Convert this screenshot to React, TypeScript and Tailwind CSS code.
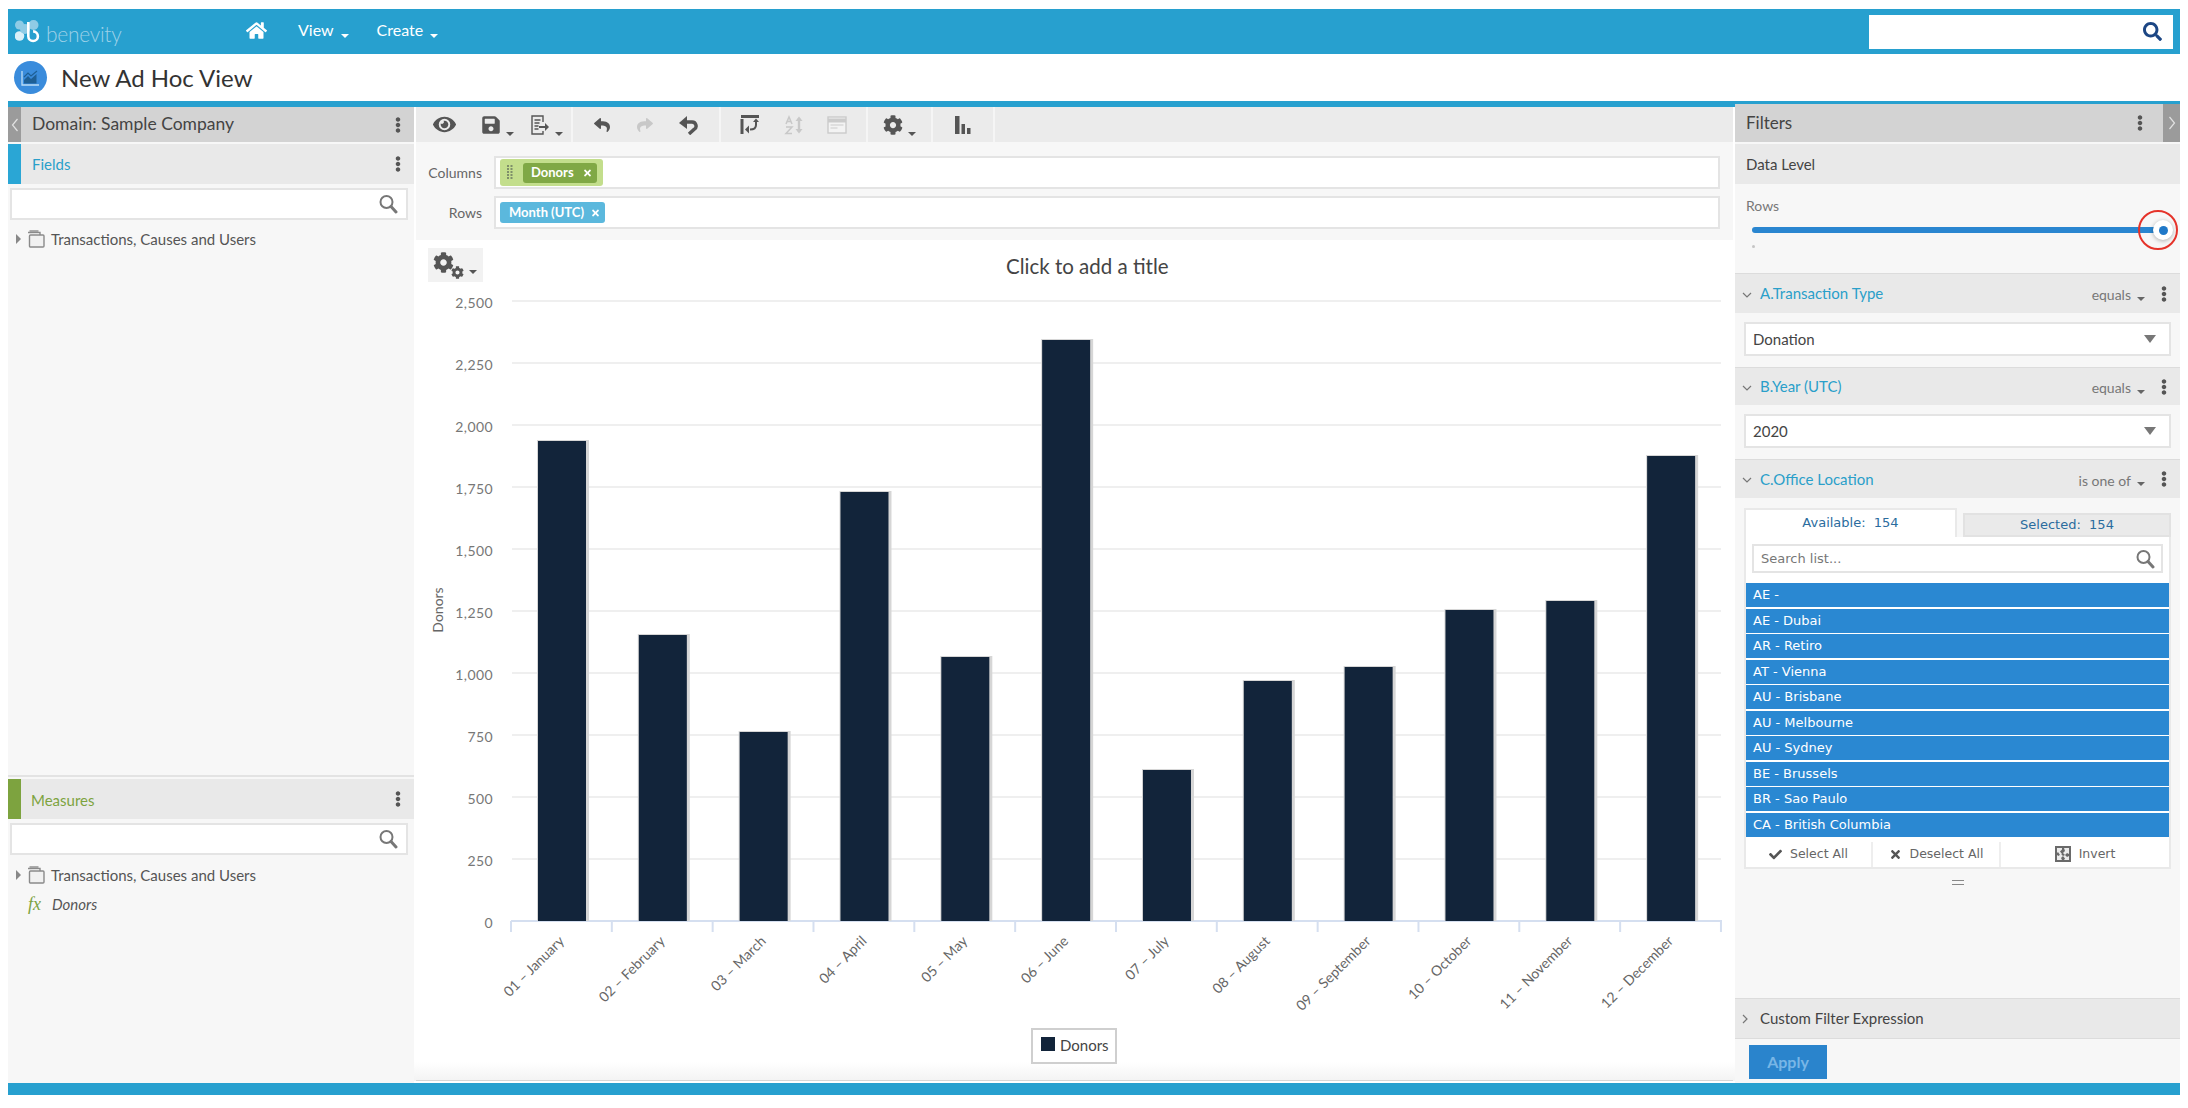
import type { ReactNode } from "react";
import { FaCheck, FaCog, FaEllipsisV, FaEye, FaHome, FaReply, FaSave, FaSearch, FaShare, FaTimes } from "react-icons/fa";

const months = [
  { label: "01 – January", top: 441 },
  { label: "02 – February", top: 635 },
  { label: "03 – March", top: 732 },
  { label: "04 – April", top: 492 },
  { label: "05 – May", top: 657 },
  { label: "06 – June", top: 340 },
  { label: "07 – July", top: 770 },
  { label: "08 – August", top: 681 },
  { label: "09 – September", top: 667 },
  { label: "10 – October", top: 610 },
  { label: "11 – November", top: 601 },
  { label: "12 – December", top: 456 },
];
const yTicks = ["2,500", "2,250", "2,000", "1,750", "1,500", "1,250", "1,000", "750", "500", "250", "0"];
const offices = ["AE -", "AE - Dubai", "AR - Retiro", "AT - Vienna", "AU - Brisbane", "AU - Melbourne", "AU - Sydney", "BE - Brussels", "BR - Sao Paulo", "CA - British Columbia"];

const Caret = ({ className = "border-t-[#555]" }: { className?: string }) => (
  <span className={`inline-block w-0 h-0 border-x-[4px] border-x-transparent border-t-[4px] ${className}`} />
);

const Dots = () => <FaEllipsisV className="w-[14px] h-[16px] text-[#555]" />;

const Magnifier = () => (
  <svg viewBox="0 0 20 20" className="w-[20px] h-[20px] text-[#777]" fill="none" stroke="currentColor">
    <circle cx="8.5" cy="8" r="6" strokeWidth="2" />
    <path d="M13 12.5l5 5.5" strokeWidth="3" strokeLinecap="round" />
  </svg>
);

const SearchBox = () => (
  <div className="h-[32px] ml-[2px] mr-[6px] mt-[4px] bg-white border-2 border-[#e4e4e4] flex items-center justify-end pr-[8px]">
    <Magnifier />
  </div>
);

const SetIcon = () => (
  <svg viewBox="0 0 18 18" className="w-[18px] h-[18px]" fill="#fff" stroke="#8a8a8a" strokeWidth="1.4">
    <path d="M1 2.5h12v3" />
    <path d="M2.5 1h9" />
    <rect x="2.5" y="5" width="14.5" height="12" rx="1" fill="#f1f1f1" />
  </svg>
);

const TreeRow = () => (
  <div className="flex items-center h-[20px] pl-[8px]">
    <span className="w-0 h-0 border-y-[5px] border-y-transparent border-l-[5px] border-l-[#888]" />
    <span className="ml-[6px] mr-[6px]"><SetIcon /></span>
    <span className="text-[15px] text-[#555]">Transactions, Causes and Users</span>
  </div>
);

const Tool = ({ w, children }: { w: string; children: ReactNode }) => (
  <div className={`${w} flex items-center justify-center gap-[5px]`}>{children}</div>
);

const ToolCaret = () => <span className="mt-[10px]"><Caret /></span>;

const FilterHeader = ({ title, op, h }: { title: string; op: string; h: string }) => (
  <div className={`${h} bg-[#e9e9e9] border-t border-[#dcdcdc] flex items-center pl-[7px] pr-[9px] shrink-0`}>
    <svg viewBox="0 0 10 6" className="w-[10px] h-[6px] mt-[2px]" fill="none" stroke="#777" strokeWidth="1.2"><path d="M1 1l4 4 4-4" /></svg>
    <span className="ml-[8px] text-[15px] text-[#2a9fc9]">{title}</span>
    <span className="ml-auto text-[14px] text-[#777] mt-[2px]">{op}</span>
    <span className="ml-[6px] mr-[12px] mt-[2px]"><Caret className="border-t-[#666]" /></span>
    <Dots />
  </div>
);

const FilterSelect = ({ value }: { value: string }) => (
  <div className="h-[34px] mx-[9px] bg-white border-2 border-[#e4e4e4] flex items-center pl-[7px] pr-[13px]">
    <span className="text-[15px] text-[#444]">{value}</span>
    <span className="ml-auto w-0 h-0 border-x-[6px] border-x-transparent border-t-[8px] border-t-[#777]" />
  </div>
);

const App = () => {
  return (
    <div className="w-[2188px] h-[1108px] bg-white pt-[9px] px-[8px] overflow-hidden font-['Lato',sans-serif]">
      <header className="h-[45px] bg-[#27a0cf] flex items-center">
        <div className="w-[150px] flex items-center pl-[7px]">
          <svg viewBox="0 0 26 24" className="w-[26px] h-[24px] mt-[-2px]">
            <circle cx="4.5" cy="6" r="4.5" fill="#8fcbe5" />
            <circle cx="18.5" cy="6" r="5" fill="#8fcbe5" />
            <circle cx="4.5" cy="17" r="4.8" fill="#d9eff8" />
            <circle cx="10" cy="10" r="5" fill="#8fcbe5" />
            <path d="M13.3 3v14.2a4.8 4.8 0 1 0 4.8-4.8" fill="none" stroke="#ffffff" strokeWidth="2.6" />
          </svg>
          <span className="ml-[5px] text-[21px] font-light text-[#9dd1e8] leading-none mt-[4px] tracking-[-0.3px]">benevity</span>
        </div>
        <FaHome className="ml-[88px] mb-[3px] w-[21px] h-[19px] text-white" />
        <span className="ml-[31px] mb-[3px] text-[16px] text-white">View</span>
        <span className="ml-[7px]"><Caret className="border-t-white" /></span>
        <span className="ml-[28px] mb-[3px] text-[16px] text-white">Create</span>
        <span className="ml-[7px]"><Caret className="border-t-white" /></span>
        <div className="ml-auto mr-[7px] w-[304px] h-[34px] bg-white flex items-center justify-end pr-[11px]">
          <FaSearch className="w-[19px] h-[19px] text-[#1c4684]" />
        </div>
      </header>

      <div className="h-[47px] flex items-center pl-[6px]">
        <span className="w-[33px] h-[33px] rounded-full bg-[#3a8cdc] flex items-center justify-center">
          <svg viewBox="0 0 19 16" className="w-[19px] h-[16px]" fill="none">
            <path d="M1 1v14h17" stroke="#bcdcf5" strokeWidth="1.3" />
            <path d="M3 13.5V10l4-4 3 3 5.5-5v9.5z" fill="#1e5f95" />
            <path d="M3 7l4-4 3 3 6-5" stroke="#1e5f95" strokeWidth="1.2" />
          </svg>
        </span>
        <h1 className="ml-[14px] text-[24px] text-[#333] leading-none">New Ad Hoc View</h1>
      </div>

      <div className="flex h-[982px]">
        <aside className="w-[406px] flex flex-col bg-[#f7f7f7]">
          <div className="h-[6px] bg-[#27a0cf] shrink-0" />
          <div className="h-[35px] bg-[#d3d3d3] flex items-center shrink-0">
            <div className="w-[13px] h-full bg-[#9b9b9b] flex items-center justify-center">
              <svg viewBox="0 0 8 14" className="w-[8px] h-[14px]" fill="none" stroke="#e2e2e2" strokeWidth="1.2"><path d="M6.5 1L1.5 7l5 6" /></svg>
            </div>
            <span className="ml-[11px] text-[17.5px] text-[#444]">Domain: Sample Company</span>
            <span className="ml-auto mr-[9px]"><Dots /></span>
          </div>
          <div className="h-[40px] mt-[2px] bg-[#e9e9e9] flex items-center shrink-0">
            <div className="w-[13px] h-full bg-[#2aa6d5]" />
            <span className="ml-[11px] text-[15px] text-[#2a9fc9]">Fields</span>
            <span className="ml-auto mr-[9px]"><Dots /></span>
          </div>
          <SearchBox />
          <div className="mt-[9px]"><TreeRow /></div>
          <div className="flex-1" />
          <div className="h-[308px] border-t-2 border-[#e3e3e3] pt-[2px] shrink-0">
            <div className="h-[40px] bg-[#e9e9e9] flex items-center">
              <div className="w-[13px] h-full bg-[#7da33f]" />
              <span className="ml-[10px] mt-[2px] text-[15px] text-[#7da33f]">Measures</span>
              <span className="ml-auto mr-[9px]"><Dots /></span>
            </div>
            <div className="mt-[2px]"><SearchBox /></div>
            <div className="mt-[10px]"><TreeRow /></div>
            <div className="flex items-center h-[20px] mt-[9px] pl-[20px]">
              <span className="w-[22px] font-['Liberation_Serif',serif] italic text-[18px] text-[#7da33f]">fx</span>
              <span className="ml-[2px] text-[15px] italic text-[#555]">Donors</span>
            </div>
          </div>
        </aside>

        <main className="w-[1321px] flex flex-col">
          <div className="h-[6px] bg-[#27a0cf] shrink-0" />
          <div className="h-[35px] ml-[2px] mr-[2px] bg-[#ebebeb] flex shrink-0">
            <div className="flex border-r-2 border-[#f5f5f5]">
              <Tool w="w-[56px]"><FaEye className="w-[23px] h-[21px] text-[#555]" /></Tool>
              <Tool w="w-[50px]"><FaSave className="w-[20px] h-[20px] text-[#555]" /><ToolCaret /></Tool>
              <Tool w="w-[49px]">
                <svg viewBox="0 0 20 20" className="w-[20px] h-[20px]" fill="none" stroke="#555" strokeWidth="1.4">
                  <path d="M13 7V1H2v18h11v-3" />
                  <path d="M4.5 5h6M4.5 8h5M4.5 11h4M4.5 14h4" />
                  <path d="M9 11h6V8l4 4-4 4v-3H9z" fill="#555" stroke="none" />
                </svg>
                <ToolCaret />
              </Tool>
            </div>
            <div className="flex border-r-2 border-[#f5f5f5]">
              <Tool w="w-[58px]"><FaReply className="w-[20px] h-[16px] text-[#555]" /></Tool>
              <Tool w="w-[28px]"><FaShare className="w-[20px] h-[16px] text-[#c8c8c8]" /></Tool>
              <Tool w="w-[60px]">
                <svg viewBox="0 0 20 20" className="w-[20px] h-[20px]" fill="none">
                  <path d="M6 7h7a4 4 0 0 1 2 7.5L10 19" stroke="#555" strokeWidth="3.4" />
                  <path d="M0 8l8-7v13z" fill="#555" />
                </svg>
              </Tool>
            </div>
            <div className="flex border-r-2 border-[#f5f5f5]">
              <Tool w="w-[58px]">
                <svg viewBox="0 0 20 19" className="w-[20px] h-[19px]" fill="none" stroke="#555">
                  <path d="M1 1.5h18" strokeWidth="3" />
                  <path d="M2 4v15" strokeWidth="3" />
                  <path d="M16 5v5c0 3-2.5 4.5-6 4.5" strokeWidth="2" />
                  <path d="M9 10.5v8l-4-4z" fill="#555" stroke="none" />
                  <path d="M13 7l3-3.5L19 7z" fill="#555" stroke="none" />
                </svg>
              </Tool>
              <Tool w="w-[29px]">
                <svg viewBox="0 0 20 20" className="w-[20px] h-[20px]" fill="none" stroke="#c8c8c8" strokeWidth="1.5">
                  <path d="M2 9l3-7 3 7M3 6.5h4M2 12h6l-6 6.5h6" />
                  <path d="M15 3v14" strokeWidth="2.4" />
                  <path d="M11.5 6L15 1.5 18.5 6zM11.5 14l3.5 4.5 3.5-4.5z" fill="#c8c8c8" stroke="none" />
                </svg>
              </Tool>
              <Tool w="w-[58px]">
                <svg viewBox="0 0 20 18" className="w-[20px] h-[18px]" fill="#f3f3f3" stroke="#cbcbcb" strokeWidth="1.4">
                  <rect x="1" y="1" width="18" height="16" />
                  <path d="M1 4.5h18" strokeWidth="4" />
                  <path d="M3.5 9h13M3.5 12h7" strokeWidth="1" />
                </svg>
              </Tool>
            </div>
            <div className="flex border-r-2 border-[#f5f5f5]">
              <Tool w="w-[63px]"><FaCog className="w-[20px] h-[20px] text-[#555]" /><ToolCaret /></Tool>
            </div>
            <div className="flex border-r-2 border-[#f5f5f5]">
              <Tool w="w-[60px]">
                <svg viewBox="0 0 16 18" className="w-[16px] h-[18px]" fill="#555">
                  <rect x="0" y="0" width="4.5" height="18" />
                  <rect x="6.5" y="8" width="3.5" height="10" />
                  <rect x="12" y="12" width="3.5" height="6" />
                </svg>
              </Tool>
            </div>
          </div>

          <div className="h-[98px] ml-[2px] mr-[2px] bg-[#f7f7f7] pt-[14px] pr-[13px] flex flex-col gap-[7px] shrink-0">
            <div className="flex items-center h-[33px]">
              <span className="w-[66px] text-right text-[14px] text-[#666]">Columns</span>
              <div className="ml-[12px] flex-1 h-full bg-white border-2 border-[#e4e4e4] flex items-center pl-[4px]">
                <div className="h-[27px] bg-[#c3de8c] rounded-[3px] flex items-center pl-[7px] pr-[6px]">
                  <svg viewBox="0 0 6 15" className="w-[6px] h-[15px]" fill="#7f8f6a">
                    {[0, 3, 6, 9, 12].map((y) => (
                      <g key={y}>
                        <rect x="0" y={y} width="2" height="2" />
                        <rect x="3.5" y={y} width="2" height="2" />
                      </g>
                    ))}
                  </svg>
                  <div className="ml-[10px] h-[20px] w-[74px] bg-[#80a845] rounded-[3px] flex items-center pl-[8px] text-white text-[13px] font-bold">
                    Donors
                    <FaTimes className="ml-auto mr-[5px] w-[9px] h-[10px]" />
                  </div>
                </div>
              </div>
            </div>
            <div className="flex items-center h-[33px]">
              <span className="w-[66px] text-right text-[14px] text-[#666]">Rows</span>
              <div className="ml-[12px] flex-1 h-full bg-white border-2 border-[#e4e4e4] flex items-center pl-[4px]">
                <div className="h-[21px] w-[105px] bg-[#5bb8dd] rounded-[3px] flex items-center pl-[9px] text-white text-[13px] font-bold">
                  Month (UTC)
                  <FaTimes className="ml-auto mr-[5px] w-[9px] h-[10px]" />
                </div>
              </div>
            </div>
          </div>

          <div className="h-[50px] flex items-start pt-[8px] pl-[14px] shrink-0">
            <div className="w-[55px] h-[34px] bg-[#f2f2f2] flex items-center pl-[5px]">
              <FaCog className="w-[21px] h-[21px] text-[#555] mb-[6px]" />
              <FaCog className="w-[13px] h-[13px] text-[#555] -ml-[3px] mt-[14px]" />
              <span className="ml-[5px] mt-[6px]"><Caret /></span>
            </div>
            <span className="ml-[523px] mt-[3px] text-[20.5px] text-[#444]">Click to add a title</span>
          </div>

          <svg viewBox="414 290 1321 791" className="w-[1321px] h-[791px] block shrink-0">
            <defs>
              <linearGradient id="chartFade" x1="0" y1="0" x2="0" y2="1">
                <stop offset="0" stopColor="#ffffff" />
                <stop offset="1" stopColor="#f3f3f3" />
              </linearGradient>
            </defs>
            <rect x="414" y="1062" width="1321" height="19" fill="url(#chartFade)" />
            <line x1="416" x2="1733" y1="1080.5" y2="1080.5" stroke="#d6d6d6" strokeWidth="1" />
            {yTicks.map((t, i) => {
              const y = 301 + i * 62;
              return (
                <g key={t}>
                  {i < 10 && <line x1="512" x2="1721" y1={y} y2={y} stroke="#efefef" strokeWidth="2" />}
                  <text x="493" y={y + 7} textAnchor="end" fontSize="14" fill="#777" letterSpacing="0.4">{t}</text>
                </g>
              );
            })}
            <text transform="translate(443 610) rotate(-90)" textAnchor="middle" fontSize="14" fill="#666">Donors</text>
            <line x1="511" x2="1722" y1="921" y2="921" stroke="#d5dff0" strokeWidth="2" />
            {[...months.map((_, i) => i), 12].map((i) => {
              const x = 511 + i * 100.83;
              return <line key={i} x1={x} x2={x} y1="921" y2="932" stroke="#d5dff0" strokeWidth="2" />;
            })}
            {months.map((m, i) => {
              const tick = 511 + i * 100.83;
              return (
                <g key={m.label}>
                  <rect x={tick + 26} y={m.top - 1} width={52} height={921 - m.top + 1} fill="#d6d6d6" />
                  <rect x={tick + 27} y={m.top} width={48} height={921 - m.top} fill="#12243a" />
                  <text
                    transform={`translate(${tick + 54} 942) rotate(-45)`}
                    textAnchor="end"
                    fontSize="14"
                    fill="#666"
                  >
                    {m.label}
                  </text>
                </g>
              );
            })}
            <rect x="1032" y="1029" width="84" height="34" fill="#fff" stroke="#cfcfcf" strokeWidth="2" />
            <rect x="1041" y="1037" width="14" height="14" fill="#12243a" />
            <text x="1060" y="1051" fontSize="15" fill="#444">Donors</text>
          </svg>
        </main>

        <aside className="w-[445px] flex flex-col bg-[#f7f7f7]">
          <div className="h-[3px] bg-[#27a0cf] shrink-0" />
          <div className="h-[38px] bg-[#d3d3d3] flex items-center pl-[11px] shrink-0">
            <span className="text-[17px] text-[#444]">Filters</span>
            <span className="ml-auto mr-[16px]"><Dots /></span>
            <div className="w-[17px] h-full bg-[#9b9b9b] flex items-center justify-center">
              <svg viewBox="0 0 8 14" className="w-[8px] h-[14px]" fill="none" stroke="#e2e2e2" strokeWidth="1.2"><path d="M1.5 1l5 6-5 6" /></svg>
            </div>
          </div>
          <div className="h-[40px] mt-[2px] bg-[#e9e9e9] flex items-center pl-[11px] text-[15px] text-[#444] shrink-0">Data Level</div>
          <div className="h-[89px] pl-[11px] pt-[13px] relative shrink-0">
            <div className="text-[14px] text-[#777] leading-[18px]">Rows</div>
            <div className="ml-[6px] mt-[12px] w-[412px] h-[6px] rounded-full bg-[#2a86d0]" />
            <div className="ml-[6px] mt-[12px] w-[3px] h-[3px] rounded-full bg-[#c5c5c5]" />
            <div className="absolute left-[418px] top-[36px] w-[20px] h-[20px] rounded-full bg-white shadow-[0_1px_4px_rgba(0,0,0,0.3)] flex items-center justify-center">
              <span className="w-[9px] h-[9px] rounded-full bg-[#1f78c8]" />
            </div>
            <div className="absolute left-[403px] top-[26px] w-[40px] h-[40px] rounded-full border-[2.5px] border-[#e5332a]" />
          </div>

          <FilterHeader title="A.Transaction Type" op="equals" h="h-[40px]" />
          <div className="h-[54px] pt-[9px]"><FilterSelect value="Donation" /></div>
          <FilterHeader title="B.Year (UTC)" op="equals" h="h-[38px]" />
          <div className="h-[54px] pt-[9px]"><FilterSelect value="2020" /></div>
          <FilterHeader title="C.Office Location" op="is one of" h="h-[39px]" />

          <div className="pt-[10px] px-[9px] font-['DejaVu_Sans',sans-serif]">
            <div className="flex items-end h-[29px]">
              <div className="w-[213px] h-[29px] bg-white border-x-2 border-t-2 border-[#e9e9e9] text-center text-[13px] text-[#2b6c9e] leading-[26px]">Available:&nbsp; 154</div>
              <div className="ml-[6px] flex-1 h-[24px] bg-[#eaeaea] border-2 border-[#e2e2e2] text-center text-[13px] text-[#2b6c9e] leading-[20px]">Selected:&nbsp; 154</div>
            </div>
            <div className="bg-white border-2 border-t-0 border-[#e9e9e9]">
              <div className="px-[6px] pt-[7px] pb-[10px]">
                <div className="h-[29px] border-2 border-[#e4e4e4] flex items-center pl-[7px] pr-[6px] text-[13px] text-[#777]">
                  Search list...
                  <span className="ml-auto"><Magnifier /></span>
                </div>
              </div>
              <ul className="flex flex-col gap-[1.5px]">
                {offices.map((o) => (
                  <li key={o} className="h-[24px] bg-[#2a88d2] pl-[7px] text-[13px] text-white leading-[24px]">{o}</li>
                ))}
              </ul>
              <div className="h-[25px] mt-[5px] flex text-[12.5px] text-[#666]">
                <div className="w-[127px] flex items-center justify-center gap-[8px] border-r-2 border-[#eeeeee]">
                  <FaCheck className="w-[13px] h-[13px] text-[#555]" />Select All
                </div>
                <div className="w-[128px] flex items-center justify-center gap-[8px] border-r-2 border-[#eeeeee]">
                  <FaTimes className="w-[13px] h-[13px] text-[#555]" />Deselect All
                </div>
                <div className="flex-1 flex items-center justify-center gap-[8px]">
                  <svg viewBox="0 0 16 16" className="w-[16px] h-[16px]">
                    <rect width="16" height="16" fill="#6a6a6a" />
                    <path d="M2 2h5v1.5L5 5.5 7 8l-2 1-2-3-1 1zM14 2v6l-2-1-2 2-2-2 2-2-1-3zM2 14v-5l1.5 1L6 8l2 2-2 2 1 2zM14 14H9l1-1.5-2-2.5 2-1 2 2 2-1z" fill="#ececec" />
                  </svg>
                  Invert
                </div>
              </div>
            </div>
            <div className="mt-[11px] mx-auto w-[12px] h-[5px] border-y border-[#888]" />
          </div>

          <div className="flex-1" />
          <div className="h-[41px] bg-[#e9e9e9] border-y border-[#dcdcdc] flex items-center pl-[7px] text-[15px] text-[#444] shrink-0">
            <svg viewBox="0 0 6 10" className="w-[6px] h-[10px]" fill="none" stroke="#777" strokeWidth="1.2"><path d="M1 1l4 4-4 4" /></svg>
            <span className="ml-[12px]">Custom Filter Expression</span>
          </div>
          <div className="h-[44px] pl-[14px] pt-[6px] shrink-0">
            <button className="w-[78px] h-[34px] bg-[#2a84cc] text-[#78b6e6] text-[16px] font-bold">Apply</button>
          </div>
        </aside>
      </div>

      <div className="h-[12px] bg-[#27a0cf]" />
    </div>
  );
};

export default App;
